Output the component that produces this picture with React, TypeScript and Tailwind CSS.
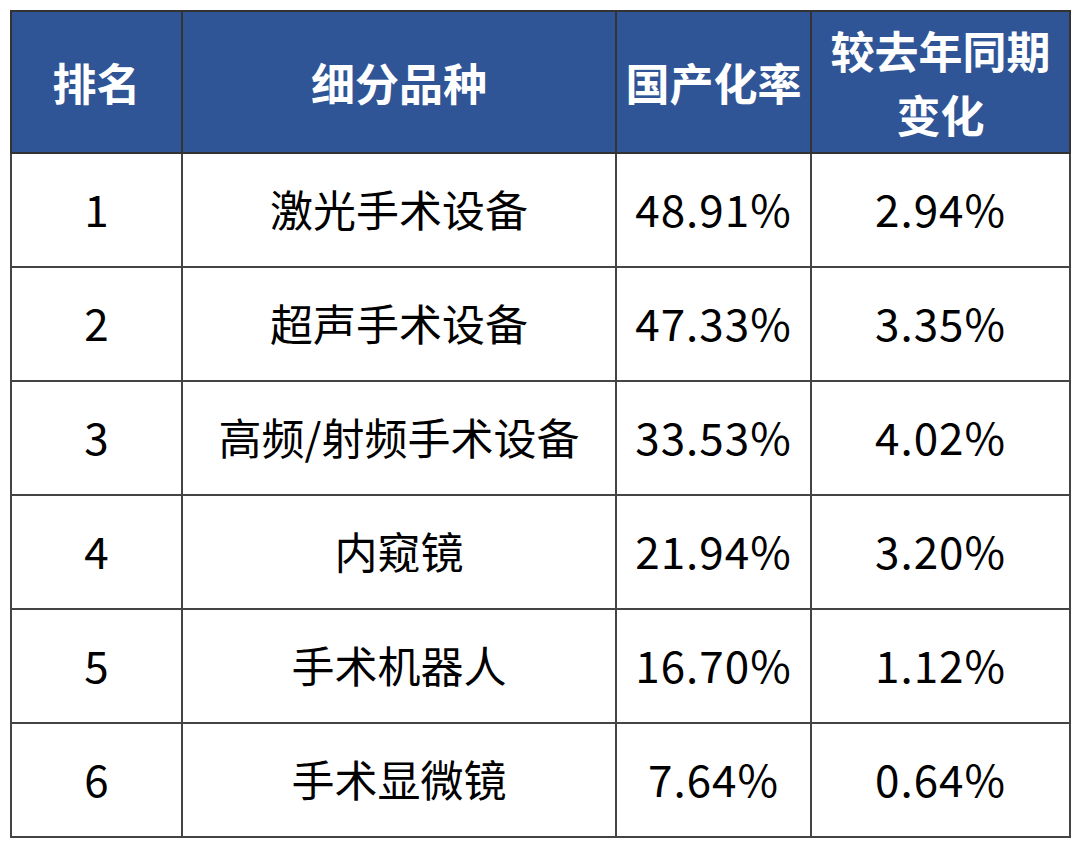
const rows = [
  ["1", "激光手术设备", "48.91%", "2.94%"],
  ["2", "超声手术设备", "47.33%", "3.35%"],
  ["3", "高频/射频手术设备", "33.53%", "4.02%"],
  ["4", "内窥镜", "21.94%", "3.20%"],
  ["5", "手术机器人", "16.70%", "1.12%"],
  ["6", "手术显微镜", "7.64%", "0.64%"],
];

const font = { fontFamily: '"Noto Sans CJK SC", "Noto Sans", sans-serif' };

const App = () => {
  return (
    <div className="w-[1080px] h-[848px] bg-white pl-[10px] pt-[10px]" style={font}>
      <table className="border-collapse border-2 border-[#333] table-fixed">
        <colgroup>
          <col className="w-[171px]" />
          <col className="w-[434px]" />
          <col className="w-[195px]" />
          <col className="w-[259px]" />
        </colgroup>
        <thead>
          <tr className="h-[142px] bg-[#2f5597] text-white text-[44px] leading-[64px]">
            <th className="border-2 border-[#333] font-bold">排名</th>
            <th className="border-2 border-[#333] font-bold">细分品种</th>
            <th className="border-2 border-[#333] font-bold">国产化率</th>
            <th className="border-2 border-[#333] font-bold">
              较去年同期
              <br />
              变化
            </th>
          </tr>
        </thead>
        <tbody>
          {rows.map((r) => (
            <tr key={r[0]} className="h-[114px] text-black text-center">
              <td className="border-2 border-[#444] text-[44px] pb-[4px]">{r[0]}</td>
              <td className="border-2 border-[#444] text-[43px] pb-[4px]">{r[1]}</td>
              <td className="border-2 border-[#444] text-[44px] tracking-[1px] pb-[4px]">{r[2]}</td>
              <td className="border-2 border-[#444] text-[44px] tracking-[1px] pb-[4px]">{r[3]}</td>
            </tr>
          ))}
        </tbody>
      </table>
    </div>
  );
};

export default App;
